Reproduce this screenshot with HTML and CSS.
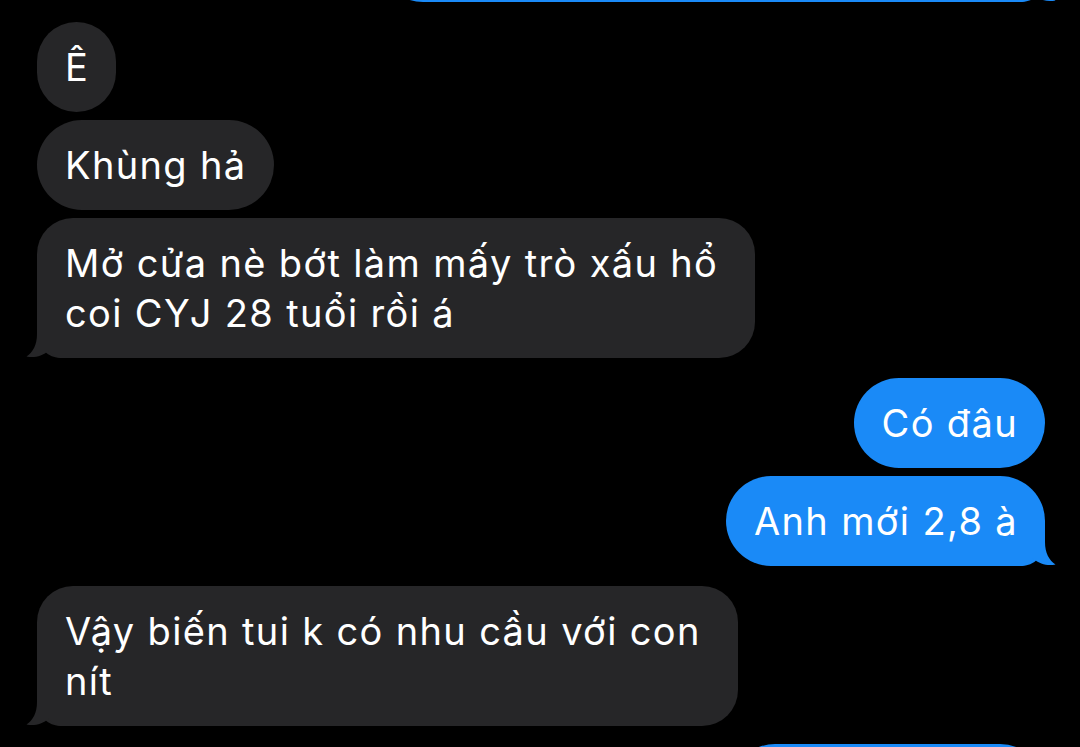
FILE: index.html
```html
<!DOCTYPE html>
<html lang="vi">
<head>
<meta charset="utf-8">
<title>Tin nhắn</title>
<link rel="stylesheet" href="styles.css">
</head>
<body>
<div class="chat">
  <div class="msg out tailed partial-top">&nbsp;<svg class="tail" viewBox="0 0 40 30" width="40" height="30"><path d="M12 0 L12 6 C12 17 8 24 1.5 28.5 C9 30 17 28.5 24 22.5 C27 26.5 30 29 35 30 L40 30 L40 0 Z"/></svg></div>

  <div class="msg in switch">Ê</div>
  <div class="msg in">Khùng hả</div>
  <div class="msg in multi tailed">Mở cửa nè bớt làm mấy trò xấu hổ<br>coi CYJ 28 tuổi rồi á<svg class="tail" viewBox="0 0 40 30" width="40" height="30"><path d="M12 0 L12 6 C12 17 8 24 1.5 28.5 C9 30 17 28.5 24 22.5 C27 26.5 30 29 35 30 L40 30 L40 0 Z"/></svg></div>

  <div class="msg out switch">Có đâu</div>
  <div class="msg out tailed">Anh mới 2,8 à<svg class="tail" viewBox="0 0 40 30" width="40" height="30"><path d="M12 0 L12 6 C12 17 8 24 1.5 28.5 C9 30 17 28.5 24 22.5 C27 26.5 30 29 35 30 L40 30 L40 0 Z"/></svg></div>

  <div class="msg in multi tailed switch">Vậy biến tui k có nhu cầu với con<br>nít<svg class="tail" viewBox="0 0 40 30" width="40" height="30"><path d="M12 0 L12 6 C12 17 8 24 1.5 28.5 C9 30 17 28.5 24 22.5 C27 26.5 30 29 35 30 L40 30 L40 0 Z"/></svg></div>

  <div class="msg out switch partial-bottom">&nbsp;</div>
</div>
</body>
</html>
```

FILE: styles.css
```css
html, body {
  margin: 0;
  height: 747px;
  overflow: hidden;
  background: #000;
}

body {
  font-family: Inter, "Noto Sans", "Liberation Sans", sans-serif;
  -webkit-font-smoothing: antialiased;
}

.chat {
  display: flex;
  flex-direction: column;
  gap: 8px;
  padding: 0 35px 0 37px;
}

.msg {
  position: relative;
  box-sizing: border-box;
  padding: 20px 27px 20px 28px;
  border-radius: 45px;
  font-size: 38px;
  line-height: 50px;
  letter-spacing: 1.35px;
  font-weight: 400;
  color: #fff;
  white-space: nowrap;
}

.in {
  align-self: flex-start;
  background: #262628;
}

.out {
  align-self: flex-end;
  background: #1a8af7;
}

.in .tail { fill: #262628; }
.out .tail { fill: #1a8af7; }

.switch {
  margin-top: 12px;
}

.multi {
  padding-right: 37px;
  border-radius: 36px;
}

.tail {
  position: absolute;
  bottom: 0;
  display: block;
}

.in.tailed {
  border-bottom-left-radius: 24px;
}

.in .tail {
  left: -12px;
}

.out.tailed {
  border-bottom-right-radius: 24px;
}

.out .tail {
  right: -12px;
  transform: scaleX(-1);
}

.partial-top {
  width: 667px;
  margin-top: -88px;
}

.partial-bottom {
  width: 315px;
  margin-top: 10px;
}
```
